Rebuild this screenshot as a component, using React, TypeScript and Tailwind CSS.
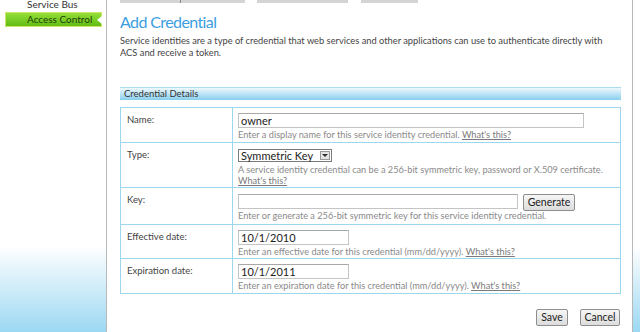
import React from 'react';

const hint = 'text-[9.2px] leading-[11px] text-[#8a8a8a]';
const input = 'h-[15px] border border-[#c4c4c4] border-t-[#a8a8a8] bg-white px-[2px] text-[11px] leading-[13px] text-[#222]';
const btn = 'h-[17px] rounded-[2px] border border-[#8e8e8e] bg-gradient-to-b from-[#f6f6f6] to-[#dcdcdc] text-[10.5px] leading-[15px] text-[#222]';

function WhatsThis() {
  return <span className="text-[#7a7a7a] underline">What's this?</span>;
}

function Row({ label, children, h }: { label: string; children: React.ReactNode; h: string }) {
  return (
    <div className={`grid grid-cols-[112px_1fr] border-b border-[#9dd6ef] last:border-b-0 ${h}`}>
      <div className="border-r border-[#9dd6ef] pl-[6px] pt-[6px] text-[9.5px] leading-[11px] text-[#444]">{label}</div>
      <div className="pl-[5px] pt-[5px]">{children}</div>
    </div>
  );
}

export default function App() {
  return (
    <div className="flex h-[332px] w-[640px] overflow-hidden bg-white font-['Lato',sans-serif] text-[#333]">
      {/* left nav */}
      <aside className="flex w-[106px] flex-col bg-gradient-to-b from-white from-[74%] to-[#9bd8f2]">
        <div className="-mt-[3px] h-[15px] pl-[27px] text-[10px] leading-[14px] text-[#333]">Service Bus</div>
        <div className="relative ml-[5px] h-[15px] w-[97px] border border-[#cfe46a] bg-gradient-to-b from-[#94df38] to-[#62bd12] pl-[21px] text-[10px] leading-[13px] text-[#223d05]">
          Access Control
          <span className="absolute right-[-1px] top-[3px] h-0 w-0 border-y-[4px] border-r-[5px] border-y-transparent border-r-white" />
        </div>
      </aside>
      <div className="w-[1px] bg-[#b8b8b8]" />

      {/* main */}
      <main className="flex w-[525px] flex-col pl-[13px] pr-[11px]">
        <div className="flex h-[3px] gap-[12px]">
          <div className="flex w-[125px] bg-[#d4d4d4]">
            <div className="w-[60px]" />
            <div className="w-[1px] bg-[#7f8a99]" />
          </div>
          <div className="w-[91px] bg-[#d4d4d4]" />
          <div className="ml-[1px] w-[57px] bg-[#d4d4d4]" />
        </div>

        <h1 className="mt-[9px] text-[16px] leading-[20px] tracking-[-0.6px] text-[#3a9ee0]">Add Credential</h1>
        <p className="mt-[3px] text-[9.3px] leading-[12px] text-[#444]">
          Service identities are a type of credential that web services and other applications can use to authenticate directly with
          ACS and receive a token.
        </p>

        <div className="mt-[28px] h-[13px] border-t border-[#a9dcf1] bg-gradient-to-b from-[#eef8fd] to-[#86cfee] pl-[4px] text-[9.5px] leading-[12px] text-[#333]">
          Credential Details
        </div>

        <div className="mt-[7px] border border-[#9dd6ef]">
          <Row label="Name:" h="h-[35px]">
            <div className={`${input} w-[346px]`}>owner</div>
            <div className={`${hint} mt-[1px]`}>
              Enter a display name for this service identity credential. <WhatsThis />
            </div>
          </Row>
          <Row label="Type:" h="h-[45px]">
            <div className="mt-[1px] flex h-[13px] w-[94px] items-center border border-[#7a7a7a] bg-white pl-[2px] pr-[1px] text-[11px] leading-[12px] text-[#222]">
              <span className="flex-1">Symmetric Key</span>
              <span className="flex h-[9px] w-[10px] items-center justify-center border border-[#9a9a9a] bg-[#e4e4e4]">
                <span className="h-0 w-0 border-x-[3px] border-t-[3px] border-x-transparent border-t-[#333]" />
              </span>
            </div>
            <div className={`${hint} mt-[2px]`}>
              A service identity credential can be a 256-bit symmetric key, password or X.509 certificate.
              <br />
              <WhatsThis />
            </div>
          </Row>
          <Row label="Key:" h="h-[37px]">
            <div className="flex items-start gap-[5px] pt-[1px]">
              <div className={`${input} w-[280px]`} />
              <button className={`${btn} w-[52px]`}>Generate</button>
            </div>
            <div className={`${hint} -mt-[1px]`}>
              Enter or generate a 256-bit symmetric key for this service identity credential.
            </div>
          </Row>
          <Row label="Effective date:" h="h-[34px]">
            <div className={`${input} w-[111px]`}>10/1/2010</div>
            <div className={`${hint} mt-[1px]`}>
              Enter an effective date for this credential (mm/dd/yyyy). <WhatsThis />
            </div>
          </Row>
          <Row label="Expiration date:" h="h-[34px]">
            <div className={`${input} w-[111px]`}>10/1/2011</div>
            <div className={`${hint} mt-[1px]`}>
              Enter an expiration date for this credential (mm/dd/yyyy). <WhatsThis />
            </div>
          </Row>
        </div>

        <div className="mt-[15px] flex justify-end gap-[12px] pr-[1px]">
          <button className={`${btn} w-[32px]`}>Save</button>
          <button className={`${btn} w-[40px]`}>Cancel</button>
        </div>
      </main>

      <div className="w-[1px] bg-[#b8b8b8]" />
      <div className="flex-1 bg-gradient-to-b from-white from-[74%] to-[#9bd8f2]" />
    </div>
  );
}
